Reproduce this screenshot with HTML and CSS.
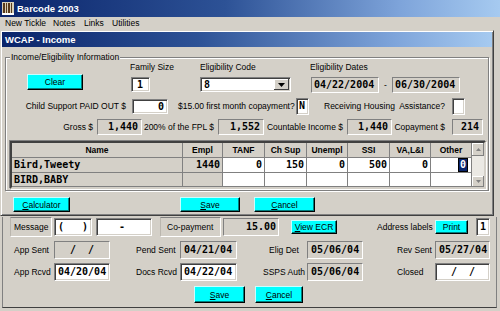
FILE: index.html
```html
<!DOCTYPE html>
<html lang="en">
<head>
  <meta charset="UTF-8">
  <title>Barcode 2003</title>
  <link rel="stylesheet" href="styles.css">
</head>
<body>
<div class="app">

  <div class="titlebar">
    <svg class="appicon" width="12" height="13" viewBox="0 0 12 13">
      <rect x="0" y="0" width="12" height="13" fill="#d8d0b8"/>
      <rect x="1" y="1" width="2" height="10" fill="#5a3a1a"/>
      <rect x="4" y="1" width="1" height="10" fill="#5a3a1a"/>
      <rect x="6" y="1" width="2" height="10" fill="#5a3a1a"/>
      <rect x="9" y="1" width="1" height="10" fill="#5a3a1a"/>
      <rect x="0" y="11" width="12" height="2" fill="#fff"/>
    </svg>
    <span>Barcode 2003</span>
  </div>

  <div class="menubar">
    <span class="m-new">New Tickle</span>
    <span class="m-notes">Notes</span>
    <span class="m-links">Links</span>
    <span>Utilities</span>
  </div>

  <!-- WCAP child window -->
  <div class="child">
    <div class="child-title">WCAP - Income</div>

    <fieldset class="group">
      <legend>Income/Eligibility Information</legend>

      <div class="row row-codes">
        <button class="btn btn-clear">Clear</button>
        <div class="field fam">
          <label>Family Size</label>
          <div class="box white num fam-box">1</div>
        </div>
        <div class="field code">
          <label>Eligibility Code</label>
          <div class="box white combo">
            <span class="num">8</span>
            <span class="combo-btn"><svg width="7" height="4" viewBox="0 0 7 4"><path d="M0 0h7L3.5 4z" fill="#000"/></svg></span>
          </div>
        </div>
        <div class="field dates">
          <label>Eligibility Dates</label>
          <div class="date-range">
            <div class="box ro num date">04/22/2004</div>
            <span class="dash">-</span>
            <div class="box ro num date">06/30/2004</div>
          </div>
        </div>
      </div>

      <div class="row row-support">
        <label class="lbl lbl-cs">Child Support PAID OUT $</label>
        <div class="box white num cs-box">0</div>
        <label class="lbl lbl-firstmo">$15.00 first month copayment?</label>
        <div class="box white num yn-box">N</div>
        <label class="lbl lbl-housing">Receiving Housing&nbsp; Assistance?</label>
        <div class="box white yn-box housing-box"></div>
      </div>

      <div class="row row-totals">
        <label class="lbl lbl-gross">Gross $</label>
        <div class="box ro num gross-box">1,440</div>
        <label class="lbl lbl-fpl">200% of the FPL $</label>
        <div class="box ro num fpl-box">1,552</div>
        <label class="lbl lbl-count">Countable Income $</label>
        <div class="box ro num count-box">1,440</div>
        <label class="lbl lbl-copay">Copayment $</label>
        <div class="box ro num copay-box">214</div>
      </div>

      <div class="grid">
        <div class="hd">Name</div>
        <div class="hd">Empl</div>
        <div class="hd">TANF</div>
        <div class="hd">Ch Sup</div>
        <div class="hd">Unempl</div>
        <div class="hd">SSI</div>
        <div class="hd">VA,L&amp;I</div>
        <div class="hd">Other</div>
        <div class="vscroll">
          <span class="sb-btn sb-up"><svg width="5" height="3" viewBox="0 0 5 3"><path d="M0 3h5L2.5 0z" fill="#808080"/></svg></span>
          <span class="sb-track"></span>
          <span class="sb-btn sb-down"><svg width="5" height="3" viewBox="0 0 5 3"><path d="M0 0h5L2.5 3z" fill="#808080"/></svg></span>
        </div>

        <div class="cell name">Bird,Tweety</div>
        <div class="cell fixed">1440</div>
        <div class="cell">0</div>
        <div class="cell">150</div>
        <div class="cell">0</div>
        <div class="cell">500</div>
        <div class="cell">0</div>
        <div class="cell"><span class="sel">0</span></div>

        <div class="cell name">BIRD,BABY</div>
        <div class="cell fixed"></div>
        <div class="cell"></div>
        <div class="cell"></div>
        <div class="cell"></div>
        <div class="cell"></div>
        <div class="cell"></div>
        <div class="cell"></div>
      </div>
    </fieldset>

    <div class="btnrow">
      <button class="btn btn-calc"><u>C</u>alculator</button>
      <button class="btn btn-save"><u>S</u>ave</button>
      <button class="btn btn-cancel"><u>C</u>ancel</button>
    </div>
  </div>

  <!-- main form below -->
  <div class="main">
    <div class="mrow msg-row">
      <div class="panel msg-lbl">Message</div>
      <div class="box white num area-box">(&nbsp;&nbsp;&nbsp;)</div>
      <div class="box white num phone-box">-</div>
      <div class="panel copay-lbl">Co-payment</div>
      <div class="box ro num cpv-box">15.00</div>
      <button class="btn btn-ecr"><u>V</u>iew ECR</button>
      <span class="addr-lbl">Address labels</span>
      <button class="btn btn-print">Print</button>
      <div class="box white num labels-box">1</div>
    </div>

    <div class="mrow date-row">
      <span class="dl dl1">App Sent</span>
      <div class="box ro num d1">&nbsp;&nbsp;/&nbsp;&nbsp;/</div>
      <span class="dl dl2">Pend Sent</span>
      <div class="box ro num d2">04/21/04</div>
      <span class="dl dl3">Elig Det</span>
      <div class="box ro num d3">05/06/04</div>
      <span class="dl dl4">Rev Sent</span>
      <div class="box ro num d4">05/27/04</div>
    </div>

    <div class="mrow date-row">
      <span class="dl dl1">App Rcvd</span>
      <div class="box white num d1">04/20/04</div>
      <span class="dl dl2">Docs Rcvd</span>
      <div class="box white num d2">04/22/04</div>
      <span class="dl dl3">SSPS Auth</span>
      <div class="box ro num d3">05/06/04</div>
      <span class="dl dl4">Closed</span>
      <div class="box white num d4">&nbsp;&nbsp;/&nbsp;&nbsp;/</div>
    </div>

    <div class="mrow foot-row">
      <button class="btn btn-fsave"><u>S</u>ave</button>
      <button class="btn btn-fcancel"><u>C</u>ancel</button>
    </div>
  </div>

</div>
</body>
</html>
```

FILE: styles.css
```css
* {
  box-sizing: border-box;
}
body {
  margin: 0;
  background-color: #d4d0c8;
  font-family: "Liberation Sans", Arial, sans-serif;
  font-size: 8.5px;
  color: #000;
}
.app {
  width: 500px;
  height: 311px;
  overflow: hidden;
}

/* title + menu */
.titlebar {
  height: 17px;
  display: flex;
  align-items: center;
  gap: 3px;
  padding-left: 2px;
  background: linear-gradient(to right, #0a246a 0%, #2d5296 45%, #7ea4da 80%, #a6caf0 100%);
  color: #fff;
  font-weight: bold;
  font-size: 9.5px;
}
.menubar {
  height: 13px;
  display: flex;
  align-items: center;
  padding-left: 5px;
  line-height: 13px;
}
.m-new { width: 48px; }
.m-notes { width: 31px; }
.m-links { width: 28px; }

/* child window */
.child {
  width: 494px;
  border: 1px solid;
  border-color: #d4d0c8 #404040 #404040 #d4d0c8;
  box-shadow: inset 1px 1px #fff, inset -1px -1px #808080;
  padding: 1px 1px 3px 1px;
}
.child-title {
  height: 15px;
  line-height: 15px;
  padding-left: 3px;
  background: linear-gradient(to right, #0a246a 0%, #2d5296 40%, #7ea4da 80%, #a6caf0 100%);
  color: #fff;
  font-weight: bold;
  font-size: 9.5px;
}
.group {
  width: 484px;
  margin: 5px 0 0 3px;
  padding: 0 0 1px 0;
  border: 1px solid #808080;
  box-shadow: inset 1px 1px #fff, 1px 1px #fff;
  min-width: 0;
}
.group legend {
  margin-left: 4px;
  padding: 0 1px;
  line-height: 10px;
  background-color: #d4d0c8;
}
.row {
  display: flex;
}
label, .lbl {
  display: block;
  line-height: 10px;
  white-space: nowrap;
}

/* sunken edit boxes */
.box {
  border: 1px solid;
  border-color: #808080 #fff #fff #808080;
  box-shadow: inset 1px 1px #404040, inset -1px -1px #d4d0c8;
  white-space: nowrap;
  overflow: hidden;
}
.box.white { background-color: #fff; }
.box.ro {
  background-color: #d4d0c8;
  box-shadow: none;
}
.num {
  font-family: "DejaVu Sans Mono", "Liberation Mono", monospace;
  font-weight: bold;
  font-size: 10px;
}

/* row 1 */
.row-codes {
  align-items: flex-start;
}
.btn {
  display: block;
  padding: 0;
  background-color: #00ffff;
  border: 1px solid;
  border-color: #c8ffff #000 #000 #c8ffff;
  box-shadow: inset -1px -1px #007f7f;
  font-family: "Liberation Sans", Arial, sans-serif;
  font-size: 8.5px;
  color: #000;
  text-align: center;
}
.btn-clear {
  width: 56px;
  height: 16px;
  margin: 12px 0 0 21px;
}
.field label {
  margin-bottom: 5px;
}
.fam {
  width: 70px;
  margin-left: 47px;
}
.fam-box {
  width: 19px;
  height: 15px;
  line-height: 13px;
  margin-left: 1px;
  padding-left: 5px;
}
.code {
  width: 110px;
}
.combo {
  width: 91px;
  height: 15px;
  display: flex;
  align-items: center;
  justify-content: space-between;
  padding: 0 1px 0 3px;
}
.combo-btn {
  width: 15px;
  height: 11px;
  display: flex;
  align-items: center;
  justify-content: center;
  background-color: #d4d0c8;
  box-shadow: inset -1px -1px #404040, inset 1px 1px #fff;
}
.date-range {
  display: flex;
  align-items: center;
}
.date {
  width: 68px;
  height: 16px;
  line-height: 14px;
  padding-left: 2px;
}
.dates .date:first-child {
  margin-left: 1px;
}
.dash {
  width: 13px;
  text-align: center;
}

/* row 2 */
.row-support {
  margin-top: 5px;
  height: 16px;
  align-items: center;
}
.row-support .num,
.row-totals .num {
  line-height: 14px;
}
.lbl-cs {
  width: 120px;
  text-align: right;
}
.cs-box {
  width: 36px;
  height: 15px;
  margin-left: 6px;
  text-align: right;
  padding-right: 3px;
}
.lbl-firstmo {
  width: 114px;
  margin-left: 10px;
}
.yn-box {
  width: 13px;
  height: 17px;
  margin-left: 4px;
  padding-left: 2px;
}
.lbl-housing {
  width: 119px;
  margin-left: 15px;
}
.housing-box {
  margin-left: 9px;
}

/* row 3 */
.row-totals {
  margin-top: 5px;
  height: 16px;
  align-items: center;
}
.row-totals .box {
  height: 16px;
  text-align: right;
  padding-right: 3px;
}
.row-totals .lbl {
  text-align: right;
}
.lbl-gross { width: 87px; }
.gross-box { width: 45px; margin-left: 4px; }
.lbl-fpl { width: 72px; }
.fpl-box { width: 46px; margin-left: 4px; }
.lbl-count { width: 79px; }
.count-box { width: 45px; margin-left: 4px; }
.lbl-copay { width: 53px; }
.copay-box { width: 31px; margin-left: 7px; }

/* income grid */
.grid {
  display: grid;
  grid-template-columns: 171px 40px 42px 42px 41px 42px 41px 41px 12px;
  grid-template-rows: 15px 15px 14px;
  width: 476px;
  margin: 6px 0 0 4px;
  border: 2px solid;
  border-color: #404040 #d4d0c8 #d4d0c8 #404040;
  box-shadow: -1px -1px #808080, 1px 1px #fff;
  background-color: #fff;
}
.hd, .cell {
  border-right: 1px solid #808080;
  border-bottom: 1px solid #808080;
}
.hd {
  background-color: #d4d0c8;
  font-weight: bold;
  text-align: center;
  line-height: 14px;
}
.cell {
  font-family: "DejaVu Sans Mono", "Liberation Mono", monospace;
  font-weight: bold;
  font-size: 10px;
  line-height: 14px;
  text-align: right;
  padding-right: 2px;
}
.cell.name {
  background-color: #d4d0c8;
  text-align: left;
  padding-left: 2px;
}
.cell.fixed {
  background-color: #d4d0c8;
}
.sel {
  display: inline-block;
  margin-right: 2px;
  padding: 0 1px;
  line-height: 12px;
  background-color: #0a246a;
  color: #fff;
  outline: 1px solid #000;
}
.vscroll {
  grid-column: 9;
  grid-row: 1 / 4;
  display: flex;
  flex-direction: column;
  background-color: #ebe9e4;
}
.sb-btn {
  height: 13px;
  display: flex;
  align-items: center;
  justify-content: center;
  background-color: #d4d0c8;
  box-shadow: inset -1px -1px #808080, inset 1px 1px #fff;
}
.sb-down {
  height: 11px;
}
.sb-track {
  flex: 1;
}

/* child buttons */
.btnrow {
  display: flex;
  margin-top: 6px;
}
.btnrow .btn {
  height: 15px;
}
.btn-calc { width: 57px; margin-left: 11px; }
.btn-save { width: 60px; margin-left: 110px; }
.btn-cancel { width: 61px; margin-left: 14px; }

/* main form */
.main {
  width: 495px;
  height: 91px;
  margin-left: 2px;
  border-left: 1px solid #808080;
  border-right: 1px solid #808080;
  border-bottom: 1px solid #404040;
}
.mrow {
  display: flex;
  align-items: center;
}
.msg-row {
  height: 20px;
  margin-top: 1px;
}
.panel {
  height: 20px;
  line-height: 18px;
  border: 1px solid;
  border-color: #808080 #fff #fff #bab6ae;
}
.msg-lbl {
  width: 42px;
  margin-left: 7px;
  padding-left: 3px;
}
.mrow .box {
  height: 18px;
  line-height: 16px;
}
.area-box {
  width: 38px;
  margin-left: 2px;
  padding-left: 3px;
}
.phone-box {
  width: 56px;
  margin-left: 4px;
  padding-left: 22px;
}
.copay-lbl {
  width: 61px;
  margin-left: 8px;
  padding-left: 6px;
}
.cpv-box {
  width: 56px;
  margin-left: 2px;
  text-align: right;
  padding-right: 2px;
}
.btn-ecr {
  width: 46px;
  height: 14px;
  margin-left: 12px;
}
.addr-lbl {
  width: 53px;
  margin-left: 40px;
  white-space: nowrap;
}
.btn-print {
  width: 33px;
  height: 14px;
  margin-left: 5px;
}
.labels-box {
  width: 14px;
  margin-left: 8px;
  padding-left: 3px;
}
.date-row {
  height: 18px;
  margin-top: 4px;
}
.dl {
  white-space: nowrap;
}
.date-row .box {
  padding-left: 3px;
}
.dl1 { width: 51px; padding-left: 11px; }
.d1 { width: 56px; }
.dl2 { width: 70px; padding-left: 26px; }
.d2 { width: 57px; }
.dl3 { width: 70px; padding-left: 24px; text-align: center; }
.d3 { width: 56px; }
.dl4 { width: 72px; padding-left: 34px; }
.d4 { width: 55px; }
.foot-row {
  margin-top: 5px;
}
.foot-row .btn {
  height: 17px;
}
.btn-fsave { width: 51px; margin-left: 191px; }
.btn-fcancel { width: 48px; margin-left: 10px; }
```
